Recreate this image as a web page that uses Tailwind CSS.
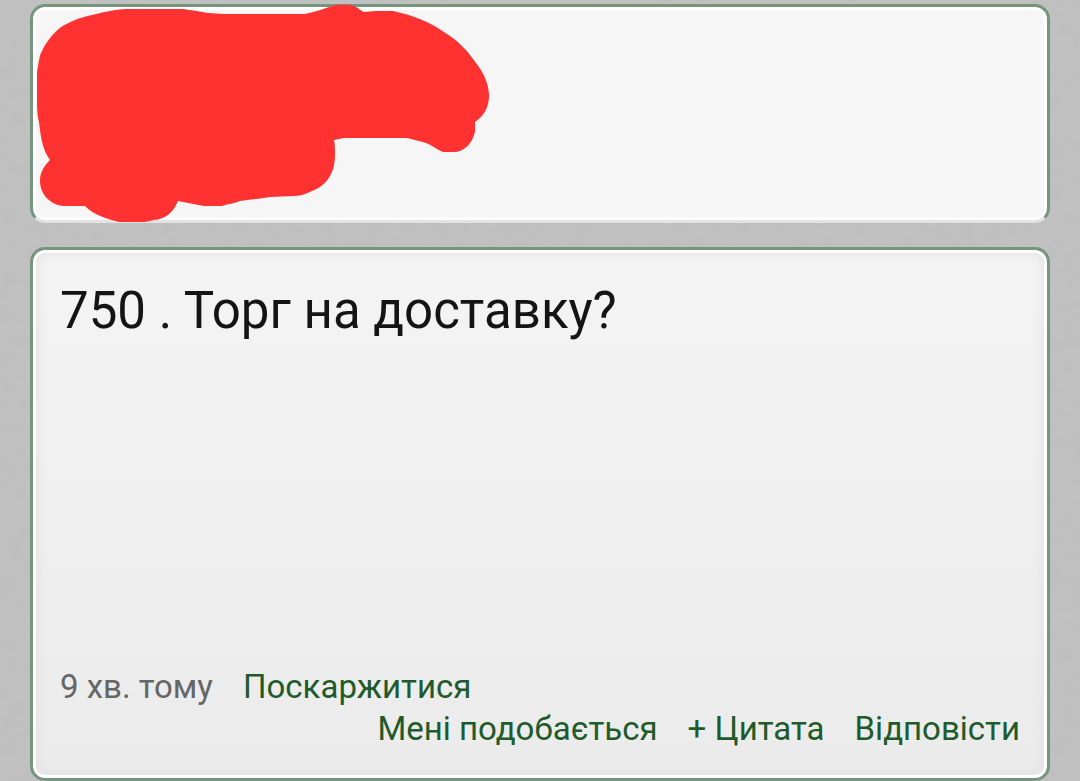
<!DOCTYPE html>
<html lang="uk">
<head>
<meta charset="utf-8">
<meta name="viewport" content="width=device-width, initial-scale=1">
<title>Коментар</title>
<script src="https://cdn.jsdelivr.net/npm/@tailwindcss/browser@4"></script>
</head>
<body class="bg-[#c0c0c0] font-['Roboto',sans-serif]">
<div class="relative isolate min-h-screen overflow-hidden">
  <!-- paper grain -->
  <svg class="absolute inset-0 -z-10 h-full w-full opacity-5" aria-hidden="true">
    <filter id="grain"><feTurbulence type="fractalNoise" baseFrequency="0.08" numOctaves="2"/><feColorMatrix type="saturate" values="0"/></filter>
    <rect width="100%" height="100%" filter="url(#grain)"/>
  </svg>
  <main class="flex min-h-screen flex-col gap-6 px-[30px] pt-1">
    <section class="relative h-[219px] rounded-[15px] border-3 border-[#76957f] border-b-[#e3e3e3] bg-[#f6f6f6] shadow-[inset_0_0_0_3px_#fff]" aria-label="Автор">
      <svg class="absolute -top-[3px] left-[3px] h-[220px] w-[460px]" viewBox="36 4 460 220" fill="#ff3131" aria-hidden="true">
        <path d="M50 160C43 150 41 140 39 122C37 115 37 108 37 95V72C39 62 39 56 42 51C47 40 54 33 61 27C68 23 76 19 84 17C96 14 110 10 125 9H183C192 10 201 12 208 13L224 14H305C315 12 323 9 332 6C340 4 348 5 354 6C359 8 361 11 364 12L376 11H393C412 15 430 22 444 32C458 41 466 49 473 59C482 70 489 82 489 96C489 107 484 116 475 122V132C472 144 464 152 454 152H443C437 150 432 145 426 143C419 141 412 139 407 138H344L334 140C335 144 335 150 335 157C334 176 325 186 312 191C306 194 300 196 293 196L270 197C259 199 248 200 240 201C233 204 227 204 222 206H204C195 204 186 203 178 201C173 213 165 219 154 220L145 222H119C107 219 94 215 85 206H64C50 205 40 194 40 181C40 172 44 166 50 160Z"/>
      </svg>
    </section>
    <article class="flex flex-1 flex-col rounded-[15px] border-3 border-[#76957f] bg-linear-to-b from-[#f4f4f4] to-[#ebebeb] px-[27px] pt-[30px] pb-7 shadow-[inset_0_0_0_3px_#fff,inset_0_0_12px_3px_#dedede]">
      <p class="text-[51px] leading-[62px] text-[#141414]">750 . Торг на доставку?</p>
      <footer class="mt-auto text-[33px] leading-[42px] text-[#1f5a2b]">
        <div class="flex gap-[30px]">
          <time class="text-[#666]">9 хв. тому</time>
          <a href="#report">Поскаржитися</a>
        </div>
        <nav class="flex justify-end gap-[30px]" aria-label="Дії">
          <a href="#like">Мені подобається</a>
          <a href="#quote">+ Цитата</a>
          <a href="#reply">Відповісти</a>
        </nav>
      </footer>
    </article>
  </main>
</div>
</body>
</html>
